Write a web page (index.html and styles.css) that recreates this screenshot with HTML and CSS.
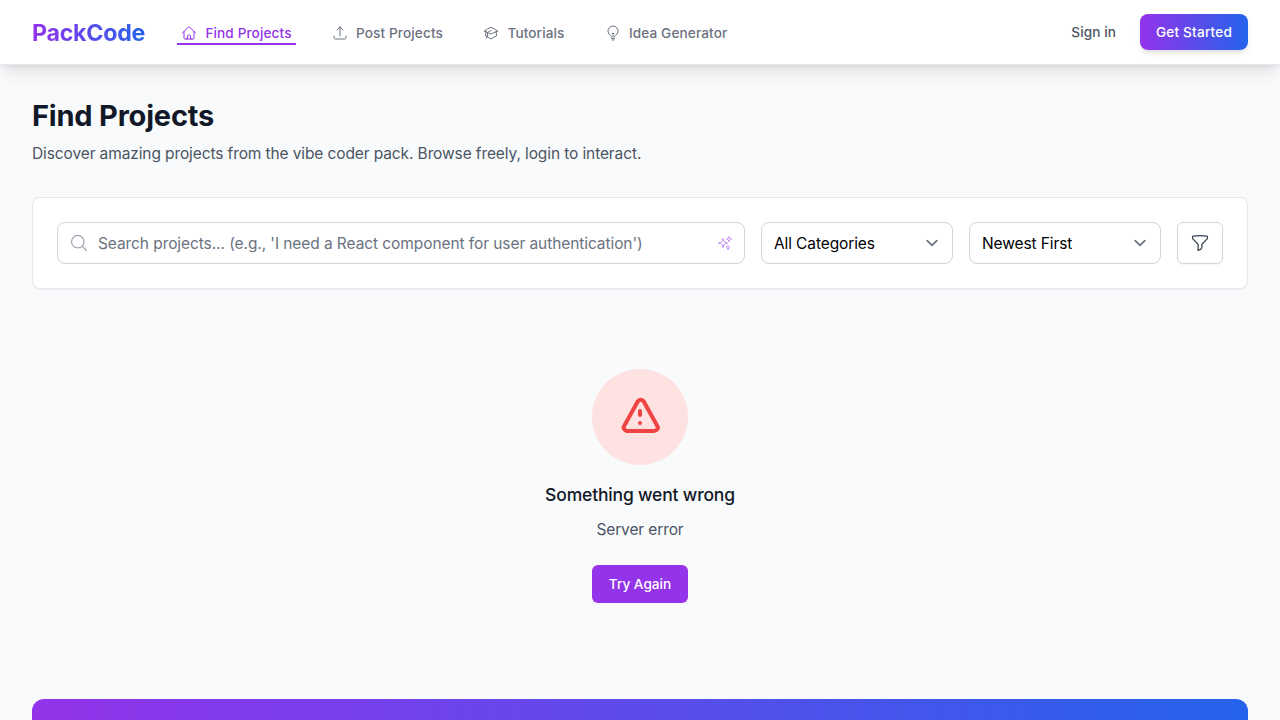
FILE: index.html
```html
<!DOCTYPE html>
<html lang="en">
<head>
<meta charset="utf-8">
<title>PackCode</title>
<link rel="stylesheet" href="styles.css">
</head>
<body>
<header class="header">
  <a class="logo">PackCode</a>
  <nav class="nav">
    <a class="nav-link active"><svg class="icon" viewBox="0 0 24 24"><path d="m2.25 12 8.954-8.955c.44-.439 1.152-.439 1.591 0L21.75 12M4.5 9.75v10.125c0 .621.504 1.125 1.125 1.125H9.75v-4.875c0-.621.504-1.125 1.125-1.125h2.25c.621 0 1.125.504 1.125 1.125V21h4.125c.621 0 1.125-.504 1.125-1.125V9.75M8.25 21h8.25"/></svg>Find Projects</a>
    <a class="nav-link"><svg class="icon" viewBox="0 0 24 24"><path d="M3 16.5v2.25A2.25 2.25 0 0 0 5.25 21h13.5A2.25 2.25 0 0 0 21 18.75V16.5m-13.5-9L12 3m0 0 4.5 4.5M12 3v13.5"/></svg>Post Projects</a>
    <a class="nav-link"><svg class="icon" viewBox="0 0 24 24"><path d="M4.26 10.147a60.438 60.438 0 0 0-.491 6.347A48.62 48.62 0 0 1 12 20.904a48.62 48.62 0 0 1 8.232-4.41 60.46 60.46 0 0 0-.491-6.347m-15.482 0a50.636 50.636 0 0 0-2.658-.813A59.906 59.906 0 0 1 12 3.493a59.903 59.903 0 0 1 10.399 5.84c-.896.248-1.783.52-2.658.814m-15.482 0A50.717 50.717 0 0 1 12 13.489a50.702 50.702 0 0 1 7.74-3.342M6.75 15a.75.75 0 1 0 0-1.5.75.75 0 0 0 0 1.5Zm0 0v-3.675A55.378 55.378 0 0 1 12 8.443m-7.007 11.55A5.981 5.981 0 0 0 6.75 15.75v-1.5"/></svg>Tutorials</a>
    <a class="nav-link"><svg class="icon" viewBox="0 0 24 24"><path d="M12 18v-5.25m0 0a6.01 6.01 0 0 0 1.5-.189m-1.5.189a6.01 6.01 0 0 1-1.5-.189m3.75 7.478a12.06 12.06 0 0 1-4.5 0m3.75 2.383a14.406 14.406 0 0 1-3 0M14.25 18v-.192c0-.983.658-1.823 1.508-2.316a7.5 7.5 0 1 0-7.517 0c.85.493 1.509 1.333 1.509 2.316V18"/></svg>Idea Generator</a>
  </nav>
  <div class="account">
    <a class="sign-in">Sign in</a>
    <a class="get-started">Get Started</a>
  </div>
</header>
<main class="main">
  <h1 class="title">Find Projects</h1>
  <p class="subtitle">Discover amazing projects from the vibe coder pack. Browse freely, login to interact.</p>
  <section class="filters">
    <div class="field search">
      <svg class="icon search-icon" viewBox="0 0 24 24"><path d="m21 21-5.197-5.197m0 0A7.5 7.5 0 1 0 5.196 5.196a7.5 7.5 0 0 0 10.607 10.607Z"/></svg>
      <span class="label placeholder">Search projects... (e.g., 'I need a React component for user authentication')</span>
      <svg class="icon sparkles" viewBox="0 0 24 24"><path d="M9.813 15.904 9 18.75l-.813-2.846a4.5 4.5 0 0 0-3.09-3.09L2.25 12l2.846-.813a4.5 4.5 0 0 0 3.09-3.09L9 5.25l.813 2.846a4.5 4.5 0 0 0 3.09 3.09L15.75 12l-2.846.813a4.5 4.5 0 0 0-3.09 3.09ZM18.259 8.715 18 9.75l-.259-1.035a3.375 3.375 0 0 0-2.455-2.456L14.25 6l1.036-.259a3.375 3.375 0 0 0 2.455-2.456L18 2.25l.259 1.035a3.375 3.375 0 0 0 2.456 2.456L21.75 6l-1.035.259a3.375 3.375 0 0 0-2.456 2.456ZM16.894 20.567 16.5 21.75l-.394-1.183a2.25 2.25 0 0 0-1.423-1.423L13.5 18.75l1.183-.394a2.25 2.25 0 0 0 1.423-1.423l.394-1.183.394 1.183a2.25 2.25 0 0 0 1.423 1.423l1.183.394-1.183.394a2.25 2.25 0 0 0-1.423 1.423Z"/></svg>
    </div>
    <div class="field select"><span class="label">All Categories</span><svg class="chevron" viewBox="0 0 20 20"><path d="m6 8 4 4 4-4"/></svg></div>
    <div class="field select"><span class="label">Newest First</span><svg class="chevron" viewBox="0 0 20 20"><path d="m6 8 4 4 4-4"/></svg></div>
    <div class="filter-button"><svg class="icon funnel" viewBox="0 0 24 24"><path d="M12 3c2.755 0 5.455.232 8.083.678.533.09.917.556.917 1.096v1.044a2.25 2.25 0 0 1-.659 1.591l-5.432 5.432a2.25 2.25 0 0 0-.659 1.591v2.927a2.25 2.25 0 0 1-1.244 2.013L9.75 21v-6.568a2.25 2.25 0 0 0-.659-1.591L3.659 7.409A2.25 2.25 0 0 1 3 5.818V4.774c0-.54.384-1.006.917-1.096A48.32 48.32 0 0 1 12 3Z"/></svg></div>
  </section>
  <section class="error">
    <div class="error-badge"><svg class="warning" viewBox="0 0 24 24"><path d="M12 9v2m0 4h.01m-6.938 4h13.856c1.54 0 2.502-1.667 1.732-2.5L13.732 4c-.77-.833-1.964-.833-2.732 0L4.082 16.5c-.77.833.192 2.5 1.732 2.5z"/></svg></div>
    <h3 class="error-title">Something went wrong</h3>
    <p class="error-text">Server error</p>
    <a class="retry">Try Again</a>
  </section>
  <section class="banner"></section>
</main>
</body>
</html>
```
FILE: styles.css
```css
* { box-sizing: border-box; }
body {
  margin: 0;
  height: 720px;
  overflow: hidden;
  background: #f9fafb;
  color: #111827;
  font: 400 15.5px/24px Inter, sans-serif;
  letter-spacing: -0.11px;
}
h1, h3, p { margin: 0; }
svg { display: block; flex: none; fill: none; stroke: currentColor; stroke-linecap: round; stroke-linejoin: round; }
.header {
  position: relative;
  display: flex;
  align-items: center;
  height: 65px;
  padding: 0 32px;
  background: #fff;
  border-bottom: 1px solid #e5e7eb;
  box-shadow: 0 10px 15px -3px rgba(0,0,0,.1), 0 4px 6px -4px rgba(0,0,0,.1);
}
.logo {
  width: 113px;
  padding-top: 2px;
  font-size: 23.2px;
  font-weight: 700;
  line-height: 32px;
  letter-spacing: -0.25px;
  white-space: nowrap;
  color: transparent;
  background: linear-gradient(to right, #9333ea, #2563eb);
  -webkit-background-clip: text;
  background-clip: text;
}
.nav { display: flex; gap: 32px; margin: 2px 0 0 32px; }
.nav-link {
  display: flex;
  align-items: center;
  padding: 2px 4px 0;
  border-bottom: 2px solid transparent;
  color: #6b7280;
  font-size: 13.6px;
  font-weight: 500;
  line-height: 20px;
  letter-spacing: 0.12px;
}
.active { color: #9333ea; border-color: #9333ea; }
.icon { width: 16px; height: 16px; stroke-width: 1.5; }
.nav-link .icon { margin-right: 8.4px; }
.account { display: flex; align-items: center; gap: 24px; margin-left: auto; font-size: 13.6px; font-weight: 500; line-height: 20px; letter-spacing: 0.1px; }
.sign-in { color: #4b5563; }
.get-started {
  width: 108px;
  padding: 8px 0;
  text-align: center;
  letter-spacing: 0.2px;
  border-radius: 8px;
  color: #fff;
  background: linear-gradient(to right, #9333ea, #2563eb);
  box-shadow: 0 4px 6px -1px rgba(0,0,0,.1), 0 2px 4px -2px rgba(0,0,0,.1);
}
.main { padding: 33px 32px 0; }
.title { font-size: 29px; font-weight: 700; line-height: 36px; letter-spacing: -0.2px; }
.subtitle { margin-top: 8px; color: #4b5563; }
.filters {
  display: flex;
  gap: 16px;
  margin-top: 31px;
  padding: 24px;
  background: #fff;
  border: 1px solid #e5e7eb;
  border-radius: 8px;
  box-shadow: 0 1px 2px rgba(0,0,0,.05);
}
.field { display: flex; align-items: center; height: 42px; padding: 0 12px; border: 1px solid #d1d5db; border-radius: 8px; color: #000; }
.label { padding-top: 2px; }
.search { flex: 1; }
.search-icon { width: 20px; height: 20px; margin: 0 9px 0 -1px; color: #9ca3af; }
.placeholder { flex: 1; color: #6b7280; white-space: nowrap; letter-spacing: -0.08px; }
.sparkles { color: #c084fc; margin-right: -1px; }
.select { width: 192px; justify-content: space-between; padding-right: 8px; }
.chevron { width: 24px; height: 24px; stroke: #6b7280; stroke-width: 1.5; }
.filter-button { display: flex; align-items: center; justify-content: center; width: 46px; height: 42px; border: 1px solid #d1d5db; border-radius: 6px; color: #374151; box-shadow: 0 1px 2px rgba(0,0,0,.05); }
.funnel { width: 20px; height: 20px; }
.error { display: flex; flex-direction: column; align-items: center; padding: 80px 0 96px; }
.error-badge { display: flex; align-items: center; justify-content: center; width: 96px; height: 96px; border-radius: 50%; background: #fee2e2; }
.warning { width: 48px; height: 48px; stroke: #ef4444; stroke-width: 2; }
.error-title { margin-top: 16px; font-size: 17.5px; font-weight: 500; line-height: 28px; letter-spacing: -0.17px; }
.error-text { margin-top: 9px; color: #4b5563; }
.retry { width: 96px; margin-top: 23px; padding: 9px 0; text-align: center; border-radius: 6px; background: #9333ea; color: #fff; font-size: 13.6px; font-weight: 500; line-height: 20px; letter-spacing: 0; }
.banner { height: 21px; border-radius: 12px 12px 0 0; background: linear-gradient(to right, #9333ea, #2563eb); }
```
